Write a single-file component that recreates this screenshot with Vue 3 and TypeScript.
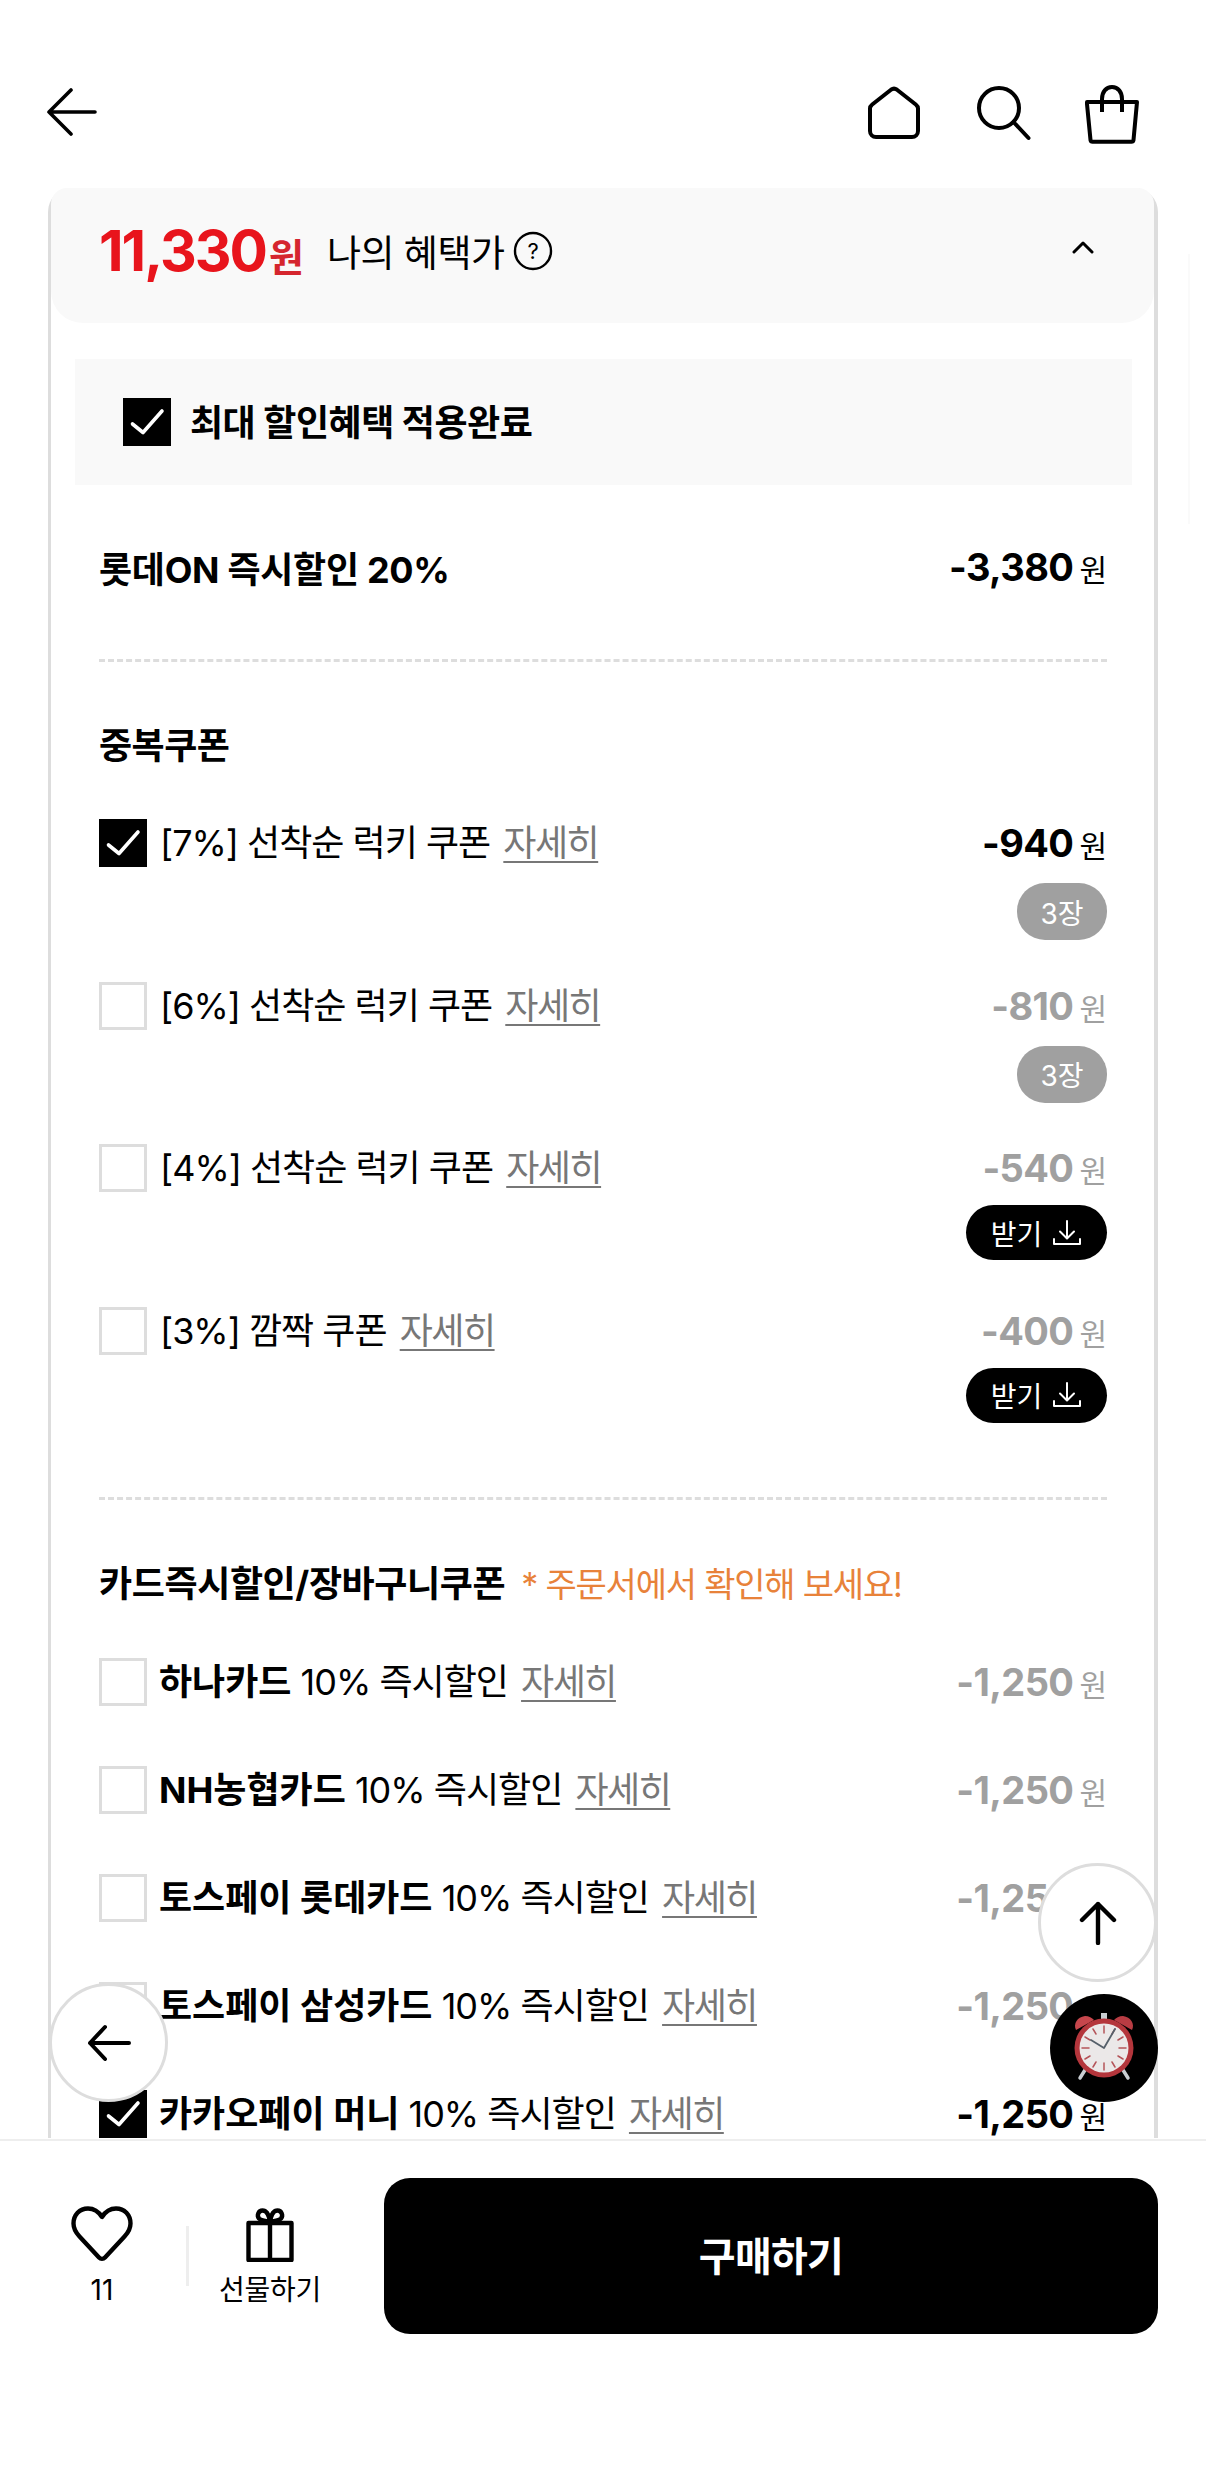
<template>
  <div class="page">
    <header class="topbar">
      <svg class="back" width="52" height="48" viewBox="0 0 52 48" fill="none" stroke="#000" stroke-width="3.6" stroke-linecap="round" stroke-linejoin="round">
        <path d="M25 2 3 24 25 46M3 24h46" />
      </svg>
      <div class="topicons">
        <svg width="56" height="56" viewBox="0 0 56 56" fill="none" stroke="#000" stroke-width="4" stroke-linejoin="round">
          <path d="M4 23.5c0-1.500.7-2.800 1.900-3.700L25 4.700c1.800-1.300 4.200-1.300 6 0l19.100 15.100c1.200.9 1.900 2.200 1.900 3.700V46c0 3.300-2.700 6-6 6H10c-3.300 0-6-2.700-6-6z" />
        </svg>
        <svg width="56" height="56" viewBox="0 0 56 56" fill="none" stroke="#000" stroke-width="4" stroke-linecap="round">
          <circle cx="24" cy="23" r="20" />
          <path d="m38.500 37 15 16" />
        </svg>
        <svg width="56" height="60" viewBox="0 0 56 60" fill="none" stroke="#000" stroke-width="4" stroke-linejoin="round">
          <path d="M3 17h50l-3.500 38c-.2 1-.9 1.700-2 1.700h-39c-1 0-1.800-.7-2-1.700L3 19z" />
          <path d="M18 27V14C18 7 22 2 28 2s10 5 10 12v13" />
        </svg>
      </div>
    </header>

    <main class="content">
      <section class="card">
        <div class="card-head">
          <span class="price">11,330<em>원</em></span>
          <span class="price-label">나의 혜택가</span>
          <svg class="help" width="40" height="40" viewBox="0 0 40 40" fill="none" stroke="#000" stroke-width="2.400">
            <circle cx="20" cy="20" r="18" />
            <text x="20" y="27.500" text-anchor="middle" stroke="none" fill="#000" class="help-mark">?</text>
          </svg>
          <svg class="chevron" width="24" height="14" viewBox="0 0 24 14" fill="none" stroke="#000" stroke-width="3" stroke-linecap="round" stroke-linejoin="round">
            <path d="m3 12 9-9 9 9" />
          </svg>
        </div>

        <div class="best">
          <span class="box on">
            <svg width="48" height="48" viewBox="0 0 48 48" fill="none" stroke="#fff" stroke-width="3.600" stroke-linecap="round" stroke-linejoin="round"><path d="m9.500 26 10.500 8.500L39 13" /></svg>
          </span>
          <strong>최대 할인혜택 적용완료</strong>
        </div>

        <div class="instant">
          <strong>롯데ON 즉시할인 20%</strong>
          <span class="amount">-3,380<small>원</small></span>
        </div>

        <div class="dash" />

        <h2 class="section-title first">중복쿠폰</h2>
        <div v-for="c in coupons" :key="c.label" class="coupon">
          <span class="box" :class="{ on: c.on }">
            <svg v-if="c.on" width="48" height="48" viewBox="0 0 48 48" fill="none" stroke="#fff" stroke-width="3.600" stroke-linecap="round" stroke-linejoin="round"><path d="m9.500 26 10.500 8.500L39 13" /></svg>
          </span>
          <span class="label">{{ c.label }} <a class="more">자세히</a></span>
          <div class="coupon-side">
            <span class="amount" :class="{ off: !c.on }">{{ c.amount }}<small>원</small></span>
            <span v-if="c.count" class="pill count">{{ c.count }}</span>
            <span v-else class="pill get">
              받기
              <svg width="30" height="28" viewBox="0 0 30 28" fill="none" stroke="#fff" stroke-width="2" stroke-linecap="round" stroke-linejoin="round"><path d="M15 2v17M8 12.500l7 7 7-7M2 20v5h26v-5" /></svg>
            </span>
          </div>
        </div>

        <div class="dash second" />

        <h2 class="section-title"><span class="title-main">카드즉시할인/장바구니쿠폰</span><span class="note">* 주문서에서 확인해 보세요!</span></h2>
        <div class="cards">
          <div v-for="c in cards" :key="c.name" class="card-row">
            <span class="box" :class="{ on: c.on }">
              <svg v-if="c.on" width="48" height="48" viewBox="0 0 48 48" fill="none" stroke="#fff" stroke-width="3.600" stroke-linecap="round" stroke-linejoin="round"><path d="m9.500 26 10.500 8.500L39 13" /></svg>
            </span>
            <span class="label tight"><b>{{ c.name }}</b> 10% 즉시할인 <a class="more">자세히</a></span>
            <span class="amount" :class="{ off: !c.on }">-1,250<small>원</small></span>
          </div>
        </div>
      </section>
      <div class="next-peek" />
    </main>

    <footer class="bottombar">
      <div class="like">
        <svg width="62" height="56" viewBox="0 0 62 56" fill="none" stroke="#000" stroke-width="4.400" stroke-linejoin="round">
          <path d="M31 11C27.500 5.500 22.500 2.500 17 2.500 8.500 2.500 2.500 9 2.500 17.500c0 5 2.200 9 6 13L28 51.500c1.700 1.800 4.300 1.800 6 0l19.500-21c3.800-4 6-8 6-13C59.500 9 53.500 2.500 45 2.500c-5.500 0-10.500 3-14 8.500z" />
        </svg>
        <span>11</span>
      </div>
      <div class="divider" />
      <div class="gift">
        <svg width="48" height="54" viewBox="0 0 48 54" fill="none" stroke="#000" stroke-width="4.400" stroke-linejoin="round">
          <path d="M2.500 15h43v37h-43zM24 15v37" />
          <path d="M24 14c-3-1-9-1.500-11-3.500-2.500-3-.5-8 3.500-8s6.500 4.500 7.500 11.500zM24 14c3-1 9-1.500 11-3.500 2.500-3 .5-8-3.500-8S25 7 24 14z" />
        </svg>
        <span>선물하기</span>
      </div>
      <button class="buy" type="button">구매하기</button>
    </footer>

    <button class="fab up" type="button" aria-label="맨 위로">
      <svg width="38" height="44" viewBox="0 0 38 44" fill="none" stroke="#000" stroke-width="4.400" stroke-linecap="round" stroke-linejoin="round">
        <path d="M19 3v39M3 19 19 3l16 16" />
      </svg>
    </button>
    <button class="fab prev" type="button" aria-label="뒤로">
      <svg width="44" height="38" viewBox="0 0 44 38" fill="none" stroke="#000" stroke-width="4" stroke-linecap="round" stroke-linejoin="round">
        <path d="M18 3 3 19l15 16M3 19h39" />
      </svg>
    </button>
    <div class="timer">
      <svg class="clock" width="72" height="72" viewBox="0 0 72 72">
        <path d="m17 60-5 8M55 60l5 8" stroke="#c9ced2" stroke-width="3.500" stroke-linecap="round" />
        <path d="M8 20c-3-6 1-13 9-14 4 0 7 2 9 4z" fill="#c6464c" />
        <path d="M64 20c3-6-1-13-9-14-4 0-7 2-9 4z" fill="#b83c43" />
        <rect x="33" y="3" width="6" height="6" fill="#c9ced2" />
        <circle cx="36" cy="38" r="29.500" fill="#b4363c" />
        <circle cx="36" cy="38" r="24.500" fill="#ebe8e8" />
        <g stroke="#b5555a" stroke-width="1.500" stroke-linecap="round">
          <path d="M36 16v7M36 53v7M14 38h7M51 38h7M25 19l3 5M47 19l-3 5M25 57l3-5M47 57l-3-5M17 27l5 3M55 27l-5 3M17 49l5-3M55 49l-5-3" />
        </g>
        <path d="m36 38-13-8M36 38l11-19" stroke="#56606a" stroke-width="1.800" stroke-linecap="round" fill="none" />
      </svg>
    </div>
  </div>
</template>

<script setup lang="ts">
interface Coupon {
  label: string
  amount: string
  on: boolean
  count?: string
}

interface CardOffer {
  name: string
  on: boolean
}

const coupons: Coupon[] = [
  { label: "[7%] 선착순 럭키 쿠폰", amount: "-940", on: true, count: "3장" },
  { label: "[6%] 선착순 럭키 쿠폰", amount: "-810", on: false, count: "3장" },
  { label: "[4%] 선착순 럭키 쿠폰", amount: "-540", on: false },
  { label: "[3%] 깜짝 쿠폰", amount: "-400", on: false },
]

const cards: CardOffer[] = [
  { name: "하나카드", on: false },
  { name: "NH농협카드", on: false },
  { name: "토스페이 롯데카드", on: false },
  { name: "토스페이 삼성카드", on: false },
  { name: "카카오페이 머니", on: true },
]
</script>

<style>
html,
body {
  margin: 0;
  background: #fff;
}
</style>

<style scoped>
.page {
  position: relative;
  width: 1206px;
  height: 2471px;
  overflow: hidden;
  display: flex;
  flex-direction: column;
  background: #fff;
  color: #000;
  font-family: Inter, "Noto Sans CJK KR", sans-serif;
}

.topbar {
  flex: none;
  height: 188px;
  box-sizing: border-box;
  padding: 85px 66px 0 46px;
  display: flex;
  justify-content: space-between;
  align-items: flex-start;
}

.back {
  margin-top: 3px;
}

.topicons {
  display: flex;
  gap: 53px;
}

.content {
  position: relative;
  flex: 1;
  min-height: 0;
  overflow: hidden;
}

.next-peek {
  position: absolute;
  left: 1188px;
  top: 66px;
  width: 18px;
  height: 270px;
  border-left: 2px solid #fafafa;
}

.card {
  box-sizing: border-box;
  width: 1110px;
  margin-left: 48px;
  border-left: 3px solid #ddd;
  border-right: 4px solid #ddd;
  border-radius: 24px 24px 0 0;
}

.card-head {
  height: 135px;
  box-sizing: border-box;
  padding: 0 59px 10px 48px;
  display: flex;
  align-items: center;
  background: #f9f9f9;
  border-radius: 16px 16px 32px 32px;
}

.price {
  font-size: 57px;
  font-weight: 700;
  letter-spacing: -2px;
  color: #e8141c;
}

.price em {
  font-style: normal;
  font-size: 38px;
  letter-spacing: -1px;
  margin-left: 3px;
  color: #d5262e;
}

.price-label {
  margin-left: 24px;
  font-size: 37px;
  letter-spacing: -0.5px;
}

.help {
  margin-left: 9px;
}

.help-mark {
  font-size: 22px;
  font-family: Inter, sans-serif;
}

.chevron {
  margin-left: auto;
  margin-top: -8px;
}

.best {
  margin: 36px 22px 0 24px;
  height: 126px;
  box-sizing: border-box;
  padding: 0 0 0 48px;
  display: flex;
  align-items: center;
  gap: 19px;
  background: #f9f9f9;
  font-size: 36px;
  letter-spacing: -0.5px;
}

.best strong {
  margin-top: -5px;
}

.box {
  flex: none;
  box-sizing: border-box;
  width: 48px;
  height: 48px;
  border: 3px solid #ddd;
  background: #fff;
}

.box.on {
  border: 0;
  background: #000;
}

.box svg {
  display: block;
}

.instant {
  height: 170px;
  padding: 0 47px 6px 48px;
  box-sizing: border-box;
  display: flex;
  align-items: center;
  justify-content: space-between;
  font-size: 36px;
  letter-spacing: -0.3px;
  margin-bottom: 4px;
}

.amount {
  font-size: 38px;
  font-weight: 700;
  letter-spacing: -0.6px;
  white-space: nowrap;
}

.amount small {
  font-size: 30px;
  font-weight: 400;
  letter-spacing: 0;
  margin-left: 6px;
}

.amount.off {
  color: #a0a0a0;
}

.dash {
  margin: 0 47px 0 48px;
  border-top: 3px dashed #ddd;
}

.dash.second {
  margin-top: 28px;
}

.section-title {
  margin: 54px 47px 0 48px;
  height: 60px;
  line-height: 60px;
  font-size: 36px;
  font-weight: 700;
  white-space: nowrap;
}

.section-title.first {
  margin-top: 54px;
  letter-spacing: -0.5px;
}

.title-main {
  letter-spacing: -0.4px;
}

.note {
  margin-left: 16px;
  font-size: 34px;
  font-weight: 400;
  letter-spacing: -1.2px;
  color: #e8823a;
}

.coupon {
  display: flex;
  align-items: flex-start;
  height: 162.500px;
  padding: 0 47px 0 48px;
}

.section-title.first + .coupon {
  margin-top: 43px;
}

.label {
  margin-left: 13px;
  font-size: 36px;
  line-height: 48px;
  letter-spacing: -1px;
  white-space: nowrap;
}

.label.tight {
  margin-left: 12px;
}

.label b {
  letter-spacing: 0;
}

.more {
  margin-left: 4px;
  letter-spacing: -1.500px;
  color: #777;
  text-decoration: underline;
  text-underline-offset: 5px;
  text-decoration-thickness: 2px;
}

.coupon-side {
  margin-left: auto;
  display: flex;
  flex-direction: column;
  align-items: flex-end;
}

.coupon-side .amount {
  line-height: 48px;
}

.pill {
  margin-top: 13px;
  display: flex;
  align-items: center;
  justify-content: center;
  color: #fff;
  font-size: 28px;
}

.count {
  width: 90px;
  height: 57px;
  border-radius: 28px;
  background: #a0a0a0;
}

.get {
  width: 141px;
  height: 55px;
  margin-top: 10px;
  gap: 10px;
  border-radius: 28px;
  background: #000;
}

.cards {
  margin-top: 44px;
  padding: 0 47px 0 48px;
  display: flex;
  flex-direction: column;
  gap: 60px;
}

.card-row {
  display: flex;
  align-items: center;
  justify-content: space-between;
  height: 48px;
}

.card-row .label {
  margin-right: auto;
}

.bottombar {
  flex: none;
  position: relative;
  height: 332px;
  box-sizing: border-box;
  padding: 37px 48px 0 0;
  border-top: 2px solid #eee;
  display: flex;
  align-items: flex-start;
  background: #fff;
}

.like,
.gift {
  display: flex;
  flex-direction: column;
  align-items: center;
  font-size: 28px;
  line-height: 40px;
}

.like {
  width: 102px;
  margin: 28px 0 0 51px;
}

.like span {
  margin-top: 8px;
}

.divider {
  width: 3px;
  height: 60px;
  margin: 48px 0 0 33px;
  background: #eee;
}

.gift {
  width: 110px;
  margin: 30px 0 0 26px;
}

.gift span {
  margin-top: 8px;
  white-space: nowrap;
  letter-spacing: -0.3px;
}

.buy {
  margin-left: auto;
  width: 774px;
  height: 156px;
  padding: 0 0 4px;
  border: 0;
  border-radius: 26px;
  background: #000;
  color: #fff;
  font: 700 40px Inter, "Noto Sans CJK KR", sans-serif;
  letter-spacing: -0.7px;
}

.fab {
  position: absolute;
  box-sizing: border-box;
  width: 119px;
  height: 119px;
  padding: 0;
  border: 3px solid #ddd;
  border-radius: 50%;
  background: #fff;
  display: flex;
  align-items: center;
  justify-content: center;
}

.fab.up {
  left: 1038px;
  top: 1863px;
}

.fab.prev {
  left: 49px;
  top: 1983px;
}

.timer {
  position: absolute;
  left: 1050px;
  top: 1994px;
  width: 108px;
  height: 108px;
  border-radius: 50%;
  background: #000;
  display: flex;
  align-items: center;
  justify-content: center;
}

.clock {
  margin-top: -4px;
}
</style>
